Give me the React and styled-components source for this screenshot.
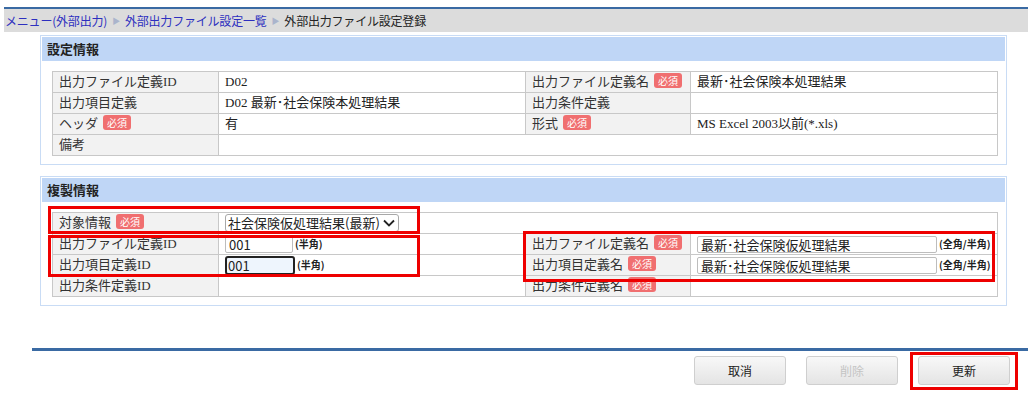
import React from "react";
import styled, { createGlobalStyle } from "styled-components";

const Global = createGlobalStyle`
  html, body { margin: 0; padding: 0; background: #fff; }
  body { font-family: "Noto Sans CJK JP", "Noto Sans", sans-serif; color: #333; }
`;

const Page = styled.div`
  width: 1028px;
  min-height: 405px;
  box-sizing: border-box;
  padding-top: 7px;
`;

const Breadcrumb = styled.div`
  margin-left: 4px;
  border-top: 2px solid #3a6aa3;
  background: #dcdcdc;
  height: 23px;
  display: flex;
  align-items: center;
  padding-left: 1px;
  font-size: 12px;
  letter-spacing: -0.2px;
`;

const Crumb = styled.span`
  color: ${(p) => (p.$link ? "#2d2fbf" : "#222")};
`;

const Sep = styled.span`
  color: #aab4cc;
  font-size: 8px;
  margin: 0 5px;
`;

const Section = styled.section`
  margin: ${(p) => p.$top}px 21px 0 40px;
  border: 1px solid #c9dcf5;
  padding: 1px;
`;

const SectionHead = styled.div`
  background: #bfd6f6;
  height: 24px;
  line-height: 24px;
  padding-left: 5px;
  font-size: 13px;
  font-weight: bold;
  color: #222;
`;

const TableWrap = styled.div`
  position: relative;
  padding: 10px 8px 7px 10px;
`;

const Table = styled.table`
  width: 946px;
  border-collapse: collapse;
  table-layout: fixed;
  font-family: "Liberation Serif", "Noto Sans CJK JP", serif;
  font-size: 13px;
  line-height: 18px;
  color: #222;
`;

const Th = styled.td`
  background: #f2f2f2;
  border: 1px solid #c8c8c8;
  height: 20px;
  padding: 0 0 0 6px;
  white-space: nowrap;
  color: #333;
`;

const Td = styled.td`
  border: 1px solid #c8c8c8;
  height: 20px;
  padding: 0 0 0 6px;
  white-space: nowrap;
  background: #fff;
`;

const CellRow = styled.div`
  display: flex;
  align-items: center;
  gap: 2px;
`;

const Badge = styled.span`
  display: inline-block;
  background: #f06f70;
  color: #fff;
  font-family: "Noto Sans CJK JP", sans-serif;
  font-size: 10px;
  line-height: 15px;
  padding: 0 4px;
  border-radius: 3px;
  margin-left: 5px;
  vertical-align: 1px;
`;

const SelectBox = styled.div`
  display: inline-flex;
  align-items: center;
  height: 16px;
  border: 1px solid #a8a8a8;
  border-radius: 3px;
  padding: 0 3px 0 2px;
  font-family: "Noto Sans CJK JP", sans-serif;
  font-size: 13px;
  color: #222;
  gap: 3px;
`;

const Input = styled.input`
  box-sizing: border-box;
  width: ${(p) => p.$w}px;
  height: ${(p) => (p.$focus ? 19 : 17)}px;
  border: ${(p) => (p.$focus ? "2px solid #222" : "1px solid #bdbdbd")};
  border-radius: ${(p) => (p.$focus ? 3 : 2)}px;
  background: ${(p) => (p.$focus ? "#eef5fd" : "#fff")};
  padding: 0 0 0 ${(p) => (p.$focus ? 1 : 3)}px;
  font-family: "Noto Sans CJK JP", sans-serif;
  font-size: 13px;
  color: #222;
  outline: none;
  margin: 0;
`;

const Note = styled.span`
  font-family: "Noto Sans CJK JP", sans-serif;
  font-size: 10px;
  font-weight: bold;
  color: #222;
`;

const RedBox = styled.div`
  position: absolute;
  left: ${(p) => p.$x}px;
  top: ${(p) => p.$y}px;
  width: ${(p) => p.$w}px;
  height: ${(p) => p.$h}px;
  border: 3px solid #ee0000;
  box-sizing: border-box;
  pointer-events: none;
`;

const Rule = styled.div`
  margin: 42px 0 0 32px;
  height: 3px;
  background: #3a6aa3;
`;

const Buttons = styled.div`
  display: flex;
  justify-content: flex-end;
  gap: 20px;
  padding: 5px 18px 0 0;
`;

const BtnSlot = styled.div`
  position: relative;
`;

const Button = styled.button`
  display: block;
  width: 92px;
  height: 29px;
  border: 1px solid #cfcfcf;
  border-radius: 3px;
  background: linear-gradient(#f8f8f8, #e4e4e4);
  font-family: "Noto Sans CJK JP", sans-serif;
  font-size: 12px;
  color: ${(p) => (p.disabled ? "#c4c4c4" : "#222")};
  padding: 0;
`;

const Chevron = () => (
  <svg width="12" height="8" viewBox="0 0 12 8">
    <path d="M1 1.5 L6 6.5 L11 1.5" fill="none" stroke="#222" strokeWidth="1.8" />
  </svg>
);

export default function App() {
  return (
    <Page>
      <Global />
      <Breadcrumb>
        <Crumb $link>メニュー(外部出力)</Crumb>
        <Sep>▶</Sep>
        <Crumb $link>外部出力ファイル設定一覧</Crumb>
        <Sep>▶</Sep>
        <Crumb>外部出力ファイル設定登録</Crumb>
      </Breadcrumb>

      <Section $top={3}>
        <SectionHead>設定情報</SectionHead>
        <TableWrap>
          <Table>
            <colgroup>
              <col style={{ width: 166 }} />
              <col style={{ width: 307 }} />
              <col style={{ width: 165 }} />
              <col />
            </colgroup>
            <tbody>
              <tr>
                <Th>出力ファイル定義ID</Th>
                <Td>D02</Td>
                <Th>出力ファイル定義名<Badge>必須</Badge></Th>
                <Td>最新･社会保険本処理結果</Td>
              </tr>
              <tr>
                <Th>出力項目定義</Th>
                <Td>D02 最新･社会保険本処理結果</Td>
                <Th>出力条件定義</Th>
                <Td></Td>
              </tr>
              <tr>
                <Th>ヘッダ<Badge>必須</Badge></Th>
                <Td>有</Td>
                <Th>形式<Badge>必須</Badge></Th>
                <Td>MS Excel 2003以前(*.xls)</Td>
              </tr>
              <tr>
                <Th>備考</Th>
                <Td colSpan={3}></Td>
              </tr>
            </tbody>
          </Table>
        </TableWrap>
      </Section>

      <Section $top={11}>
        <SectionHead>複製情報</SectionHead>
        <TableWrap>
          <Table>
            <colgroup>
              <col style={{ width: 166 }} />
              <col style={{ width: 307 }} />
              <col style={{ width: 165 }} />
              <col />
            </colgroup>
            <tbody>
              <tr>
                <Th>対象情報<Badge>必須</Badge></Th>
                <Td colSpan={3}>
                  <SelectBox>
                    社会保険仮処理結果(最新)
                    <Chevron />
                  </SelectBox>
                </Td>
              </tr>
              <tr>
                <Th>出力ファイル定義ID</Th>
                <Td>
                  <CellRow>
                    <Input $w={68} defaultValue="001" readOnly />
                    <Note>(半角)</Note>
                  </CellRow>
                </Td>
                <Th>出力ファイル定義名<Badge>必須</Badge></Th>
                <Td>
                  <CellRow>
                    <Input $w={240} defaultValue="最新･社会保険仮処理結果" readOnly />
                    <Note>(全角/半角)</Note>
                  </CellRow>
                </Td>
              </tr>
              <tr>
                <Th>出力項目定義ID</Th>
                <Td>
                  <CellRow>
                    <Input $w={70} $focus defaultValue="001" readOnly />
                    <Note>(半角)</Note>
                  </CellRow>
                </Td>
                <Th>出力項目定義名<Badge>必須</Badge></Th>
                <Td>
                  <CellRow>
                    <Input $w={240} defaultValue="最新･社会保険仮処理結果" readOnly />
                    <Note>(全角/半角)</Note>
                  </CellRow>
                </Td>
              </tr>
              <tr>
                <Th>出力条件定義ID</Th>
                <Td></Td>
                <Th>出力条件定義名<Badge>必須</Badge></Th>
                <Td></Td>
              </tr>
            </tbody>
          </Table>
          <RedBox $x={6} $y={4} $w={372} $h={28} />
          <RedBox $x={6} $y={33} $w={372} $h={42} />
          <RedBox $x={481} $y={29} $w={472} $h={51} />
        </TableWrap>
      </Section>

      <Rule />
      <Buttons>
        <BtnSlot><Button>取消</Button></BtnSlot>
        <BtnSlot><Button disabled>削除</Button></BtnSlot>
        <BtnSlot>
          <Button>更新</Button>
          <RedBox $x={-8} $y={-4} $w={108} $h={38} />
        </BtnSlot>
      </Buttons>
    </Page>
  );
}
